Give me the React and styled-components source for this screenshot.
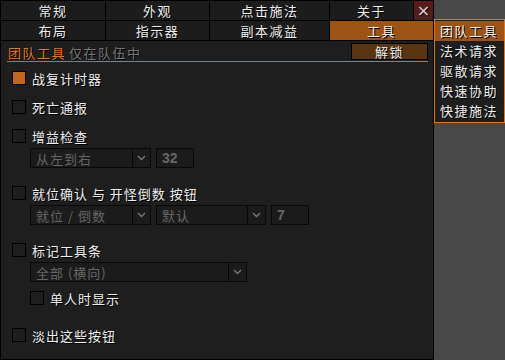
import React from 'react';
import styled, { createGlobalStyle } from 'styled-components';

const Global = createGlobalStyle`
  html, body { margin: 0; padding: 0; background: #484848; }
  body { font-family: "Noto Sans CJK SC", "Noto Sans", sans-serif; font-size: 13px; }
  * { box-sizing: border-box; }
`;

const Page = styled.div`
  display: flex;
  align-items: flex-start;
  width: 505px;
  height: 360px;
`;

const Frame = styled.div`
  width: 434px;
  height: 360px;
  background: #1e1e1e;
  border: 1px solid #000;
  display: flex;
  flex-direction: column;
`;

const TabRow = styled.div`
  display: grid;
  grid-template-columns: ${p => p.cols};
  height: 20px;
  border-bottom: 1px solid #000;
`;

const Tab = styled.div`
  display: flex;
  align-items: center;
  justify-content: center;
  background: ${p => (p.active ? '#9c5314' : '#1c1c1c')};
  border-right: 1px solid #000;
  color: #f0f0f0;
  font-size: 13px;
  line-height: 1;
  letter-spacing: 1.5px;
  text-shadow: 1px 1px 0 #000;
  &:last-child { border-right: none; }
`;

const Close = styled(Tab)`
  background: #5a1a1c;
  color: #d8d8d8;
  font-size: 16px;
  letter-spacing: 0;
  font-family: "DejaVu Sans", sans-serif;
`;

const Body = styled.div`
  padding: 2px 5px 0 6px;
  display: flex;
  flex-direction: column;
`;

const Header = styled.div`
  display: flex;
  align-items: center;
  justify-content: space-between;
  height: 19px;
  padding: 0 0 0 1px;
  border-bottom: 1px solid #c8701c;
  margin-bottom: 6px;
`;

const Title = styled.div`
  font-size: 13px;
  letter-spacing: 1.5px;
  color: #e07818;
  text-shadow: 1px 1px 0 #000;
  span { color: #777; margin-left: 3px; }
`;

const Unlock = styled.div`
  width: 77px;
  height: 17px;
  margin-bottom: 1px;
  background: #5a3512;
  border: 1px solid #000;
  color: #f0f0f0;
  display: flex;
  align-items: center;
  justify-content: center;
  font-size: 13px;
  letter-spacing: 1.5px;
  text-shadow: 1px 1px 0 #000;
`;

const Option = styled.div`
  display: flex;
  align-items: center;
  gap: 6px;
  height: 16px;
  margin-top: ${p => p.mt || 0}px;
  margin-left: ${p => p.indent || 5}px;
  color: #f0f0f0;
  letter-spacing: 1px;
  text-shadow: 1px 1px 0 #000;
`;

const Box = styled.div`
  width: 14px;
  height: 14px;
  border: 1px solid #000;
  background: ${p => (p.checked ? '#c4661a' : '#1e1e1e')};
  flex: none;
`;

const Controls = styled.div`
  display: flex;
  gap: 5px;
  margin: 4px 0 0 23px;
`;

const Select = styled.div`
  width: ${p => p.w}px;
  height: 20px;
  display: flex;
  border: 1px solid #080808;
  background: #1b1b1b;
`;

const Value = styled.div`
  flex: 1;
  padding-left: 5px;
  display: flex;
  align-items: center;
  color: #666;
  font-size: 13px;
  letter-spacing: 1px;
`;

const Arrow = styled.div`
  width: 18px;
  border-left: 1px solid #080808;
  display: flex;
  align-items: center;
  justify-content: center;
`;

const NumBox = styled.div`
  width: ${p => p.w}px;
  height: 20px;
  border: 1px solid #080808;
  background: #1b1b1b;
  color: #666;
  font-family: "Liberation Sans", sans-serif;
  font-weight: bold;
  font-size: 14px;
  display: flex;
  align-items: center;
  padding-left: 5px;
`;

const Menu = styled.div`
  margin-top: 19px;
  width: 71px;
  border: 1px solid #e07818;
  background: #1e1e1e;
  padding: 1px 0 1px;
`;

const MenuItem = styled.div`
  height: 20px;
  display: flex;
  align-items: center;
  padding: 0 0 2px 5px;
  background: ${p => (p.active ? '#9c5314' : 'transparent')};
  color: #f0f0f0;
  font-size: 13px;
  letter-spacing: 1.5px;
  text-shadow: 1px 1px 0 #000;
`;

function Chevron() {
  return (
    <svg width="9" height="6" viewBox="0 0 9 6">
      <path d="M1 1 L4.5 4.5 L8 1" stroke="#777" strokeWidth="1.4" fill="none" />
    </svg>
  );
}

function Dropdown({ w, value }) {
  return (
    <Select w={w}>
      <Value>{value}</Value>
      <Arrow><Chevron /></Arrow>
    </Select>
  );
}

export default function App() {
  return (
    <>
      <Global />
      <Page>
        <Frame>
          <TabRow cols="105px 104px 120px 84px 1fr">
            <Tab>常规</Tab>
            <Tab>外观</Tab>
            <Tab>点击施法</Tab>
            <Tab>关于</Tab>
            <Close>×</Close>
          </TabRow>
          <TabRow cols="105px 104px 120px 1fr">
            <Tab>布局</Tab>
            <Tab>指示器</Tab>
            <Tab>副本减益</Tab>
            <Tab active>工具</Tab>
          </TabRow>
          <Body>
            <Header>
              <Title>团队工具<span>仅在队伍中</span></Title>
              <Unlock>解锁</Unlock>
            </Header>
            <Option mt={2}><Box checked />战复计时器</Option>
            <Option mt={13}><Box />死亡通报</Option>
            <Option mt={13}><Box />增益检查</Option>
            <Controls>
              <Dropdown w={121} value="从左到右" />
              <NumBox w={38}>32</NumBox>
            </Controls>
            <Option mt={17}><Box />就位确认 与 开怪倒数 按钮</Option>
            <Controls>
              <Dropdown w={121} value="就位 / 倒数" />
              <Dropdown w={110} value="默认" />
              <NumBox w={38}>7</NumBox>
            </Controls>
            <Option mt={17}><Box />标记工具条</Option>
            <Controls>
              <Dropdown w={217} value="全部 (横向)" />
            </Controls>
            <Option mt={8} indent={23}><Box />单人时显示</Option>
            <Option mt={21}><Box />淡出这些按钮</Option>
          </Body>
        </Frame>
        <Menu>
          <MenuItem active>团队工具</MenuItem>
          <MenuItem>法术请求</MenuItem>
          <MenuItem>驱散请求</MenuItem>
          <MenuItem>快速协助</MenuItem>
          <MenuItem>快捷施法</MenuItem>
        </Menu>
      </Page>
    </>
  );
}
